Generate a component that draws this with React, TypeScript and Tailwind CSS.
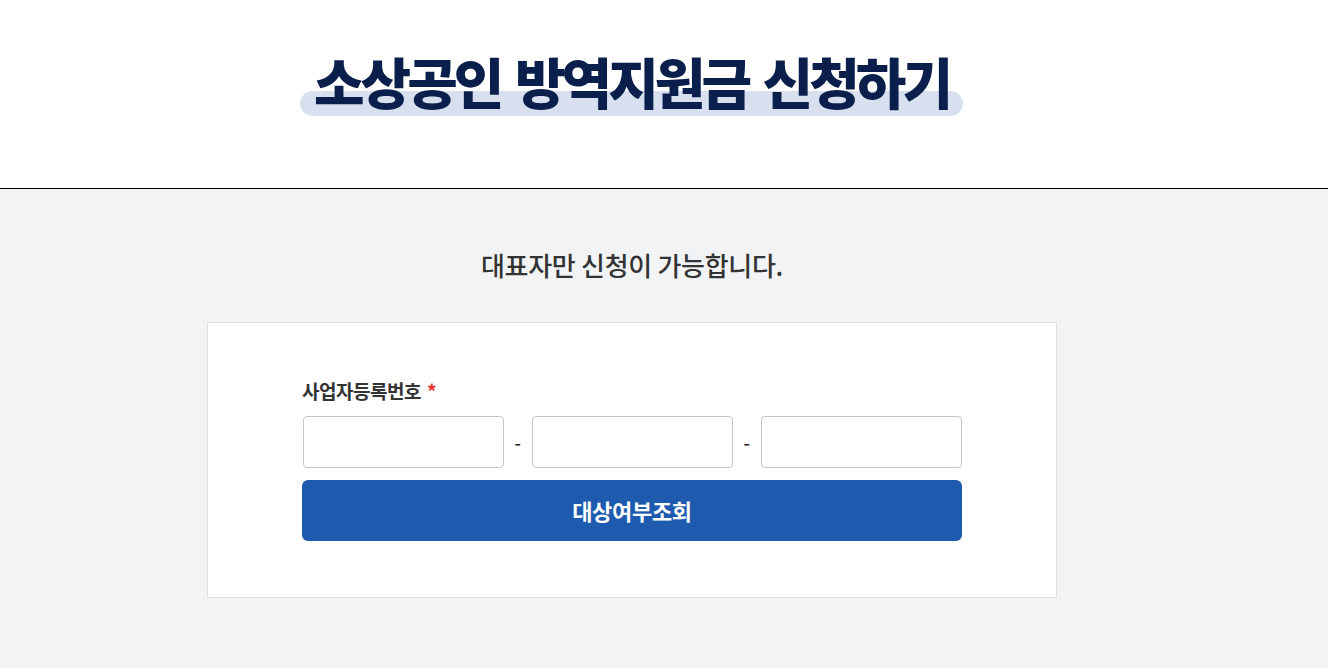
import React from "react"

const font = { fontFamily: '"Noto Sans CJK KR", "Noto Sans", sans-serif' }

function NumberInput() {
  return (
    <input
      type="text"
      className="h-[52px] w-[201px] rounded-[4px] border border-[#c6c6c6] bg-white px-3 text-[16px] outline-none"
    />
  )
}

export default function App() {
  return (
    <div className="min-h-[668px] bg-[#f2f3f5]" style={font}>
      <header className="h-[189px] border-b border-black bg-white">
        <div className="ml-[300px] w-[663px] pt-[45px]">
          <h1 className="relative whitespace-nowrap text-center">
            <span className="absolute left-0 right-0 top-[46px] h-[25px] rounded-full bg-[#d8e0ef]" />
            <span className="relative -top-[3px] text-[55px] font-black leading-[76px] tracking-[-4px] [word-spacing:6px] text-[#0b1f4d]">
              소상공인 방역지원금 신청하기
            </span>
          </h1>
        </div>
      </header>

      <main className="ml-[207px] w-[850px] pt-[58px]">
        <p className="text-center text-[26px] font-medium leading-[36px] tracking-[-0.3px] text-[#333]">
          대표자만 신청이 가능합니다.
        </p>

        <section className="mt-[39px] border border-[#e1e1e1] bg-white px-[94px] pb-[56px] pt-[54px]">
          <label className="flex items-center gap-[6px] text-[19px] font-bold leading-[28px] tracking-[-0.5px] text-[#333]">
            사업자등록번호
            <span className="text-[#e5322d]">*</span>
          </label>
          <div className="mt-[11px] flex items-center pl-px">
            <NumberInput />
            <span className="w-[29px] text-center text-[18px] font-medium text-[#222]">-</span>
            <NumberInput />
            <span className="w-[30px] text-center text-[18px] font-medium text-[#222]">-</span>
            <NumberInput />
          </div>
          <button
            type="button"
            className="mt-[12px] flex h-[61px] w-[660px] items-center justify-center rounded-[6px] bg-[#1e5bae] text-[22px] font-bold tracking-[-0.3px] text-white"
          >
            대상여부조회
          </button>
        </section>
      </main>
    </div>
  )
}
